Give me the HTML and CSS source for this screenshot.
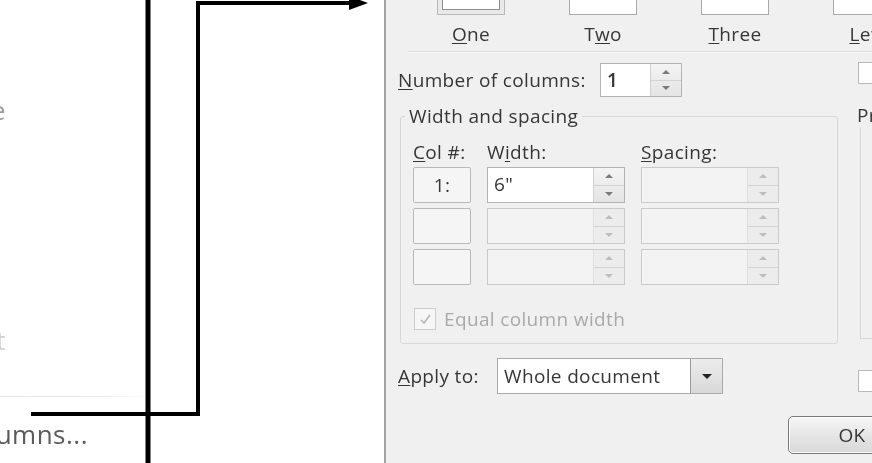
FILE: index.html
```html
<!DOCTYPE html>
<html>
<head>
<title>Columns</title>
<link rel="stylesheet" href="styles.css">
</head>
<body>
<div class="screen">

  <div class="doc-panel">
    <div class="ghost-item first"><span>Three</span></div>
    <div class="ghost-item second"><span>Right</span></div>
    <div class="menu-sep"></div>
    <div class="menu-item"><span>More Columns...</span></div>
  </div>

  <div class="dialog">
    <div class="presets">
      <div class="preset">
        <div class="preset-box selected"></div>
        <div class="preset-label"><u>O</u>ne</div>
      </div>
      <div class="preset">
        <div class="preset-box"></div>
        <div class="preset-label">T<u>w</u>o</div>
      </div>
      <div class="preset">
        <div class="preset-box"></div>
        <div class="preset-label"><u>T</u>hree</div>
      </div>
      <div class="preset">
        <div class="preset-box"></div>
        <div class="preset-label"><u>L</u>eft</div>
      </div>
    </div>

    <div class="etched"></div>

    <div class="cols-area">
      <div class="left-col">
        <div class="num-row">
          <div class="num-label"><u>N</u>umber of columns:</div>
          <div class="spin num-spin">
            <div class="spin-value bold">1</div>
            <div class="spin-btns">
              <div class="up"></div>
              <div class="down"></div>
            </div>
          </div>
        </div>

        <fieldset class="group">
          <legend>Width and spacing</legend>
          <div class="col-grid">
            <div class="col-head"><u>C</u>ol #:</div>
            <div class="col-head">W<u>i</u>dth:</div>
            <div class="col-head"><u>S</u>pacing:</div>

            <div class="col-num">1:</div>
            <div class="spin wide">
              <div class="spin-value">6"</div>
              <div class="spin-btns"><div class="up"></div><div class="down"></div></div>
            </div>
            <div class="spin wide disabled">
              <div class="spin-value"></div>
              <div class="spin-btns"><div class="up"></div><div class="down"></div></div>
            </div>

            <div class="col-num"></div>
            <div class="spin wide disabled">
              <div class="spin-value"></div>
              <div class="spin-btns"><div class="up"></div><div class="down"></div></div>
            </div>
            <div class="spin wide disabled">
              <div class="spin-value"></div>
              <div class="spin-btns"><div class="up"></div><div class="down"></div></div>
            </div>

            <div class="col-num"></div>
            <div class="spin wide disabled">
              <div class="spin-value"></div>
              <div class="spin-btns"><div class="up"></div><div class="down"></div></div>
            </div>
            <div class="spin wide disabled">
              <div class="spin-value"></div>
              <div class="spin-btns"><div class="up"></div><div class="down"></div></div>
            </div>
          </div>

          <div class="check-row disabled">
            <span class="check checked">
              <svg width="13" height="13" viewBox="0 0 13 13"><path d="M2 7 L5 10 L11 2" fill="none" stroke="#b5b5b5" stroke-width="1.6"/></svg>
            </span>
            <span>Equal column width</span>
          </div>
        </fieldset>
      </div>

      <div class="right-col">
        <span class="check line-between"></span>
        <fieldset class="preview">
          <legend>Preview</legend>
        </fieldset>
      </div>
    </div>

    <div class="apply-row">
      <div class="apply-left">
        <div class="apply-label"><u>A</u>pply to:</div>
        <div class="dropdown">
          <div class="dropdown-value">Whole document</div>
          <div class="dropdown-btn"></div>
        </div>
      </div>
      <span class="check"></span>
    </div>

    <div class="button-row">
      <div class="btn">OK</div>
    </div>
  </div>

  <svg class="arrows" width="872" height="463" viewBox="0 0 872 463">
    <line x1="148" y1="0" x2="148" y2="463" stroke="#000" stroke-width="5"/>
    <path d="M31 414 H198 V3 H352" fill="none" stroke="#000" stroke-width="4"/>
    <polygon points="349,-4 368,3 349,10" fill="#000"/>
  </svg>

</div>
</body>
</html>
```

FILE: styles.css
```css
body {
  margin: 0;
  width: 872px;
  height: 463px;
  overflow: hidden;
}

.screen {
  position: relative;
  width: 872px;
  height: 463px;
  display: flex;
  overflow: hidden;
  font-family: "Open Sans", "Noto Sans", sans-serif;
  font-size: 19px;
  letter-spacing: 0.35px;
  color: #363636;
  filter: blur(0.7px);
}

u {
  text-underline-offset: 2px;
}

/* the document side, with the tail of the menu */
.doc-panel {
  width: 384px;
  flex-shrink: 0;
  background: #fff;
  display: flex;
  flex-direction: column;
  font-size: 26px;
  letter-spacing: 0.5px;
}

.ghost-item {
  width: 6px;
  height: 32px;
  line-height: 32px;
  overflow: hidden;
  display: flex;
  justify-content: flex-end;
  white-space: nowrap;
  color: #9c9c9c;
}
.ghost-item.first {
  margin-top: 94px;
}
.ghost-item.second {
  margin-top: 198px;
  color: #d0d0d0;
}

.menu-sep {
  width: 150px;
  height: 1px;
  margin-top: 40px;
  background: linear-gradient(to right, #e4e4e4, #ececec 70%, #fff);
}

.menu-item {
  width: 88px;
  height: 32px;
  line-height: 32px;
  margin-top: 21px;
  overflow: hidden;
  display: flex;
  justify-content: flex-end;
  white-space: nowrap;
  color: #5a5a5a;
}

/* Columns dialog */
.dialog {
  flex: 1;
  background: #f0f0f0;
  border-left: 2px solid #a3a3a3;
  padding-left: 12px;
  overflow: hidden;
  min-width: 0;
}

.presets {
  display: flex;
  gap: 64px;
  padding-left: 39px;
  margin-top: -35px;
}
.preset {
  width: 68px;
  flex-shrink: 0;
  display: flex;
  flex-direction: column;
  align-items: center;
}
.preset-box {
  width: 68px;
  height: 50px;
  box-sizing: border-box;
  border: 1px solid #a9a9a9;
  background: #fff;
}
.preset-box.selected {
  border-color: #b8b8b8;
  box-shadow: inset 0 0 0 4px #e9e9e9, inset 0 0 0 5px #8c8c8c;
}
.preset-label {
  margin-top: 9px;
  line-height: 20px;
  white-space: nowrap;
}

.etched {
  margin: 7px 0 0 10px;
  border-top: 1px solid #dcdcdc;
  border-bottom: 1px solid #fafafa;
}

.cols-area {
  display: flex;
  gap: 20px;
  margin-top: 10px;
}
.left-col {
  width: 440px;
  flex-shrink: 0;
}
.right-col {
  flex: 1;
  min-width: 0;
}

.num-row {
  display: flex;
  align-items: center;
  height: 34px;
}
.num-label {
  width: 202px;
  white-space: nowrap;
}

.spin {
  display: flex;
  height: 34px;
  box-sizing: border-box;
  border: 1px solid #b4b4b4;
  background: #fff;
}
.spin-value {
  flex: 1;
  padding-left: 6px;
  line-height: 32px;
}
.spin-value.bold {
  font-weight: 600;
}
.spin-btns {
  width: 30px;
  display: flex;
  flex-direction: column;
  background: linear-gradient(#f4f4f4, #e4e4e4);
  border-left: 1px solid #d0d0d0;
}
.spin-btns div {
  flex: 1;
  display: flex;
  align-items: center;
  justify-content: center;
}
.spin-btns .up {
  border-bottom: 1px solid #d4d4d4;
}
.spin-btns .up::after {
  content: "";
  border-left: 4px solid transparent;
  border-right: 4px solid transparent;
  border-bottom: 4px solid #7a7a7a;
}
.spin-btns .down::after {
  content: "";
  border-left: 4px solid transparent;
  border-right: 4px solid transparent;
  border-top: 4px solid #7a7a7a;
}
.num-spin {
  width: 82px;
}

.spin.wide {
  width: 138px;
  height: auto;
}
.spin.disabled {
  background: #f3f3f3;
  border-color: #cacaca;
}
.spin.disabled .spin-btns {
  background: #ececec;
  border-left-color: #dedede;
}
.spin.disabled .up::after {
  border-bottom-color: #bdbdbd;
}
.spin.disabled .down::after {
  border-top-color: #bdbdbd;
}

/* group boxes */
.group {
  margin: 7px 0 0 2px;
  padding: 14px 0 11px 12px;
  border: 1px solid #d8d8d8;
  border-radius: 3px;
  height: 240px;
  box-sizing: border-box;
}
.group legend,
.preview legend {
  padding: 0 4px;
  margin-left: -8px;
  line-height: 24px;
  white-space: nowrap;
}

.col-grid {
  display: grid;
  grid-template-columns: 58px 138px 138px;
  grid-template-rows: 20px 36px 36px 36px;
  column-gap: 16px;
  row-gap: 5px;
}
.col-head {
  line-height: 20px;
  white-space: nowrap;
}
.col-num {
  box-sizing: border-box;
  border: 1px solid #b9b9b9;
  border-radius: 2px;
  background: #f5f5f5;
  text-align: center;
  line-height: 34px;
}

.check-row {
  display: flex;
  align-items: center;
  gap: 8px;
  margin-top: 22px;
  height: 24px;
}
.check-row.disabled {
  color: #a9a9a9;
}
.check {
  width: 22px;
  height: 22px;
  box-sizing: border-box;
  border: 1px solid #b9b9b9;
  background: #f6f6f6;
  display: flex;
  align-items: center;
  justify-content: center;
  flex-shrink: 0;
}
.check-row .check {
  margin-left: 1px;
  border-color: #cdcdcd;
}
.line-between {
  background: #fff;
  margin-top: -1px;
}

.preview {
  margin: 19px 0 0 2px;
  padding: 0;
  height: 236px;
  box-sizing: border-box;
  border: 1px solid #d8d8d8;
  border-right: none;
}

.apply-row {
  display: flex;
  align-items: center;
  margin-top: 14px;
}
.apply-left {
  width: 460px;
  display: flex;
  align-items: center;
  flex-shrink: 0;
}
.apply-row .check {
  background: #fff;
  margin-top: 10px;
}
.apply-label {
  width: 99px;
  white-space: nowrap;
}
.dropdown {
  width: 226px;
  height: 36px;
  box-sizing: border-box;
  border: 1px solid #a9a9a9;
  background: #fff;
  display: flex;
}
.dropdown-value {
  flex: 1;
  padding-left: 6px;
  line-height: 34px;
  white-space: nowrap;
}
.dropdown-btn {
  width: 31px;
  border-left: 1px solid #9a9a9a;
  background: linear-gradient(#ececec, #d9d9d9);
  display: flex;
  align-items: center;
  justify-content: center;
}
.dropdown-btn::after {
  content: "";
  border-left: 5px solid transparent;
  border-right: 5px solid transparent;
  border-top: 5px solid #222;
}

.button-row {
  display: flex;
  margin-top: 22px;
  padding-left: 390px;
}
.btn {
  width: 128px;
  height: 38px;
  flex-shrink: 0;
  box-sizing: border-box;
  border: 1px solid #7a7a7a;
  border-radius: 5px;
  background: linear-gradient(#f6f6f6, #e6e6e6 50%, #d8d8d8);
  box-shadow: inset 0 0 0 1px #fbfbfb;
  text-align: center;
  line-height: 36px;
}

/* hand-drawn arrows on top of the screenshot */
.arrows {
  position: absolute;
  left: 0;
  top: 0;
  pointer-events: none;
}
```
